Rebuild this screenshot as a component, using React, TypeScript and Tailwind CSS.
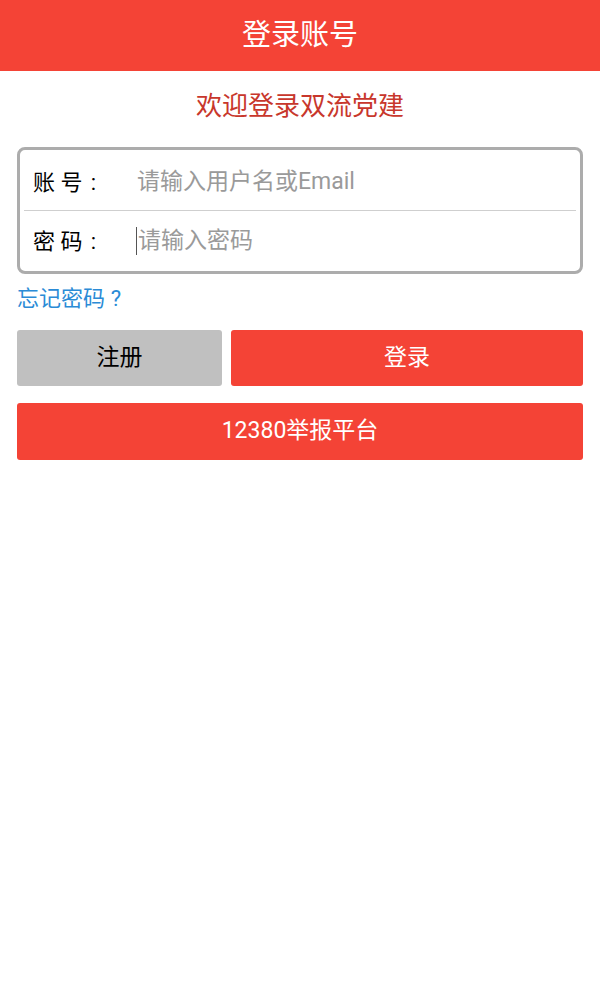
function Punct({ c }: { c: string }) {
  return <span className="inline-block w-[1em] text-center">{c}</span>;
}

export default function App() {
  return (
    <div
      lang="zh-CN"
      className="min-h-[1000px] w-full bg-white"
      style={{ fontFamily: 'Roboto, "Noto Sans CJK SC", "Noto Sans", sans-serif' }}
    >
      <header className="flex h-[71px] items-center justify-center bg-[#f44336]">
        <h1 className="text-[29px] leading-none text-white">登录账号</h1>
      </header>

      <div className="px-[17px]">
        <h2 className="mt-[20px] text-center text-[26px] leading-[30px] text-[#c8372c]">欢迎登录双流党建</h2>

        <div className="mt-[26px] rounded-[8px] border-[3px] border-[#acacac] px-[4px]">
          <div className="flex h-[61px] items-center border-b border-[#cfcfcf] pl-[9px] pt-[4px]">
            <span className="w-[104px] text-[22px] text-black">
              账 号<Punct c=":" />
            </span>
            <span className="text-[23px] text-[#9a9a9a]">请输入用户名或Email</span>
          </div>
          <div className="flex h-[60px] items-center pl-[9px]">
            <span className="w-[103px] text-[22px] text-black">
              密 码<Punct c=":" />
            </span>
            <span className="mr-[1px] h-[28px] w-px bg-[#555]" />
            <span className="text-[23px] text-[#9a9a9a]">请输入密码</span>
          </div>
        </div>

        <div className="mt-[9px] text-[22px] leading-[32px] text-[#2b8bd6]">
          忘记密码<Punct c="?" />
        </div>

        <div className="mt-[15px] flex gap-[9px]">
          <button className="h-[56px] w-[205px] rounded-[3px] bg-[#c0c0c0] text-[23px] text-black">注册</button>
          <button className="h-[56px] flex-1 rounded-[3px] bg-[#f44336] text-[23px] text-white">登录</button>
        </div>

        <button className="mt-[17px] h-[57px] w-full rounded-[3px] bg-[#f44336] text-[23px] text-white">
          12380举报平台
        </button>
      </div>
    </div>
  );
}
